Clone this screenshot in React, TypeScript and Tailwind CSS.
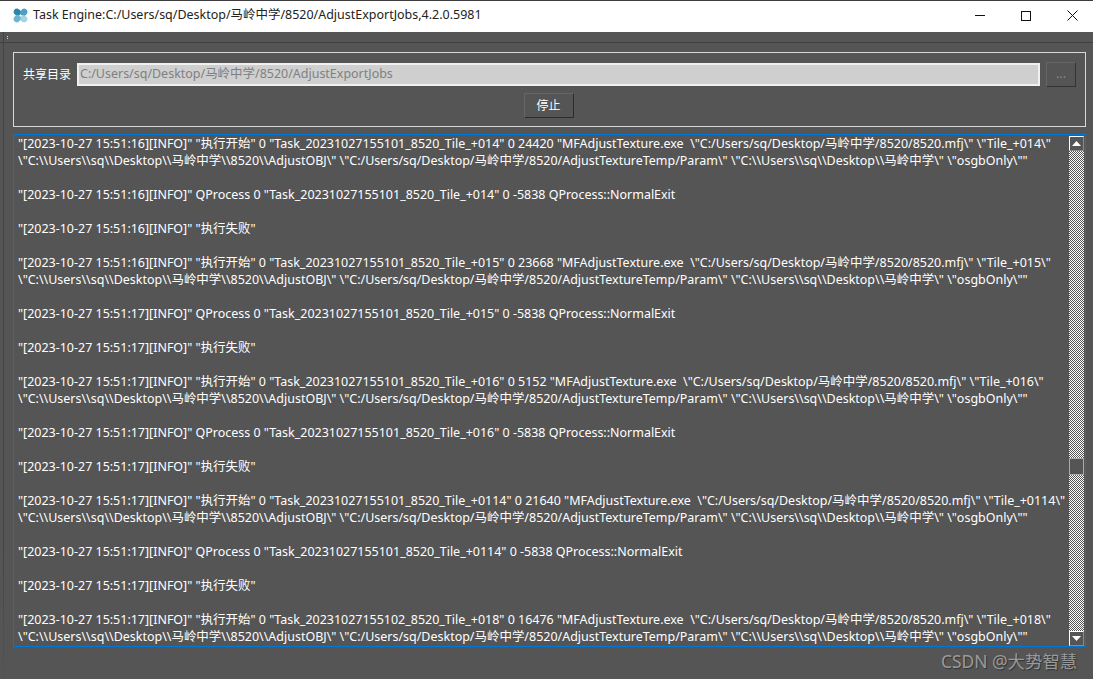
import React from "react";

const logRows: string[] = [];
const stamps = [
  ["16", "16", "16", "014", "20231027155101", "24420"],
  ["16", "17", "17", "015", "20231027155101", "23668"],
  ["17", "17", "17", "016", "20231027155101", "5152"],
  ["17", "17", "17", "0114", "20231027155101", "21640"],
];

const objLine =
  '\\"C:\\\\Users\\\\sq\\\\Desktop\\\\马岭中学\\\\8520\\\\AdjustOBJ\\" \\"C:/Users/sq/Desktop/马岭中学/8520/AdjustTextureTemp/Param\\" \\"C:\\\\Users\\\\sq\\\\Desktop\\\\马岭中学\\" \\"osgbOnly\\""';

stamps.forEach(([a, b, c, tile, task, pid]) => {
  logRows.push(
    `"[2023-10-27 15:51:${a}][INFO]" "执行开始" 0 "Task_${task}_8520_Tile_+${tile}" 0 ${pid} "MFAdjustTexture.exe  \\"C:/Users/sq/Desktop/马岭中学/8520/8520.mfj\\" \\"Tile_+${tile}\\"`
  );
  logRows.push(objLine);
  logRows.push("");
  logRows.push(`"[2023-10-27 15:51:${b}][INFO]" QProcess 0 "Task_${task}_8520_Tile_+${tile}" 0 -5838 QProcess::NormalExit`);
  logRows.push("");
  logRows.push(`"[2023-10-27 15:51:${c}][INFO]" "执行失败"`);
  logRows.push("");
});
logRows.push(
  '"[2023-10-27 15:51:17][INFO]" "执行开始" 0 "Task_20231027155102_8520_Tile_+018" 0 16476 "MFAdjustTexture.exe  \\"C:/Users/sq/Desktop/马岭中学/8520/8520.mfj\\" \\"Tile_+018\\"'
);
logRows.push(objLine);

const AppIcon = () => (
  <svg width="15" height="15" viewBox="0 0 15 15">
    <ellipse cx="4.4" cy="4.2" rx="3.9" ry="3.3" transform="rotate(35 4.4 4.2)" fill="#2f86ad" />
    <ellipse cx="10.8" cy="4.4" rx="3.3" ry="3.9" transform="rotate(35 10.8 4.4)" fill="#4d9fc4" />
    <ellipse cx="10.6" cy="10.8" rx="3.9" ry="3.3" transform="rotate(35 10.6 10.8)" fill="#a5d3e6" />
    <ellipse cx="4.2" cy="10.6" rx="3.3" ry="3.9" transform="rotate(35 4.2 10.6)" fill="#6db4d2" />
    <circle cx="7.5" cy="7.5" r="1" fill="#ffffff" />
  </svg>
);

const ScrollArrow = ({ up }: { up: boolean }) => (
  <div className="flex h-[15px] w-[15px] shrink-0 items-center justify-center border border-t-white border-l-white border-r-[#8a8a8a] border-b-[#8a8a8a] bg-[#555555]">
    <svg width="9" height="5" viewBox="0 0 9 5">
      <path d={up ? "M4.5 0L9 5H0Z" : "M0 0H9L4.5 5Z"} fill="#ffffff" />
    </svg>
  </div>
);

const Track = ({ className }: { className: string }) => (
  <div className={`w-[15px] bg-[repeating-conic-gradient(#ffffff_0_25%,#555555_0_50%)] bg-[length:2px_2px] ${className}`} />
);

export default function App() {
  return (
    <div className="relative flex h-[679px] w-[1093px] flex-col overflow-hidden bg-[#555555] font-['Microsoft_YaHei','Noto_Sans','Noto_Sans_CJK_SC',sans-serif] text-[12.48px] text-white">
      {/* Title bar */}
      <div className="flex h-8 shrink-0 items-center border-t border-[#3c3c3c] bg-white pl-[13px] pb-[2px] text-[#222222]">
        <AppIcon />
        <span className="ml-[5px]">
          Task Engine:C:/Users/sq/Desktop/马岭中学/8520/AdjustExportJobs,4.2.0.5981
        </span>
        <div className="-mr-[2px] ml-auto flex h-full items-center">
          <div className="flex h-full w-[46px] items-center justify-center">
            <div className="h-px w-[10px] bg-[#111111]" />
          </div>
          <div className="flex h-full w-[46px] items-center justify-center">
            <div className="h-[10px] w-[10px] border border-[#111111]" />
          </div>
          <div className="flex h-full w-[46px] items-center justify-center">
            <svg width="11" height="11" viewBox="0 0 11 11">
              <path d="M0.5 0.5L10.5 10.5M10.5 0.5L0.5 10.5" stroke="#111111" strokeWidth="1" />
            </svg>
          </div>
        </div>
      </div>

      {/* Toolbar strip */}
      <div className="flex h-[11px] shrink-0 items-center border-b border-[#404040] pl-[7px]">
        <div className="flex flex-col gap-px">
          <div className="h-px w-px bg-[#dddddd]" />
          <div className="h-px w-px bg-[#dddddd]" />
        </div>
      </div>

      <div className="flex min-h-0 flex-1 flex-col pl-[13px] pr-[7px] pb-[32px] pt-[9px]">
        {/* Shared folder group */}
        <div className="flex h-[75px] shrink-0 flex-col border border-[#d8d8d8] pl-[9px] pr-[9px] pt-[9px]">
          <div className="flex items-center">
            <span className="w-[54px] text-xs">共享目录</span>
            <div className="flex h-[23px] flex-1 items-center border-2 border-[#f0f0f0] bg-[#cfcfcf] pl-[1px] text-[#808080]">
              C:/Users/sq/Desktop/马岭中学/8520/AdjustExportJobs
            </div>
            <button className="ml-[6px] h-[25px] w-[30px] border border-t-[#666666] border-l-[#666666] border-r-[#333333] border-b-[#333333] bg-[#555555] text-[#8a8a8a]">
              ...
            </button>
          </div>
          <div className="mt-[6px] flex justify-center pr-[2px]">
            <button className="h-[25px] w-[50px] border border-t-[#666666] border-l-[#666666] border-r-[#2c2c2c] border-b-[#2c2c2c] bg-[#555555] text-xs text-white">
              停止
            </button>
          </div>
        </div>

        {/* Log output */}
        <div className="mt-[7px] flex min-h-0 flex-1 border border-[#0078d7]">
          <div className="min-w-0 flex-1 overflow-hidden pl-[4px]">
            {logRows.map((row, i) => (
              <div key={i} className="h-[17px] whitespace-pre leading-[17px]">
                {row}
              </div>
            ))}
          </div>
          <div className="flex w-[17px] shrink-0 flex-col items-center pt-px">
            <ScrollArrow up />
            <Track className="flex-1" />
            <div className="h-[17px] w-[15px] shrink-0 border border-[#aaaaaa] bg-[#555555]" />
            <Track className="h-[156px] shrink-0" />
            <ScrollArrow up={false} />
          </div>
        </div>
      </div>

      {/* Watermark */}
      <span className="absolute left-[941px] top-[648px] text-[17.4px] text-[#9a9a9a] [text-shadow:1px_1px_1px_#333333]">
        CSDN @大势智慧
      </span>

      {/* Window edge left over from the capture */}
      <div className="absolute bottom-0 left-[3px] top-8 w-px bg-linear-to-b from-[#444444] from-80% to-[#2d6b2d]" />
    </div>
  );
}
